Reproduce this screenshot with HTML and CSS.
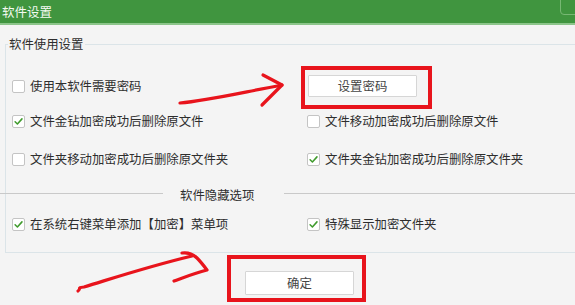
FILE: index.html
```html
<!DOCTYPE html>
<html lang="zh-CN">
<head>
<meta charset="utf-8">
<title>软件设置</title>
<link rel="stylesheet" href="styles.css">
</head>
<body>
<div class="window">
  <div class="titlebar">
    <span class="title">软件设置</span>
    <span class="close-edge"></span>
  </div>
  <fieldset class="group">
    <legend class="legend">软件使用设置</legend>
    <div class="grid">
      <label class="opt"><span class="box"></span>使用本软件需要密码</label>
      <div class="cell"><button class="btn">设置密码</button></div>
      <label class="opt"><span class="box checked"><svg viewBox="0 0 13 13"><path d="M2.5 6.8 L5.2 9.4 L10.6 3.4"/></svg></span>文件金钻加密成功后删除原文件</label>
      <label class="opt"><span class="box"></span>文件移动加密成功后删除原文件</label>
      <label class="opt"><span class="box"></span>文件夹移动加密成功后删除原文件夹</label>
      <label class="opt"><span class="box checked"><svg viewBox="0 0 13 13"><path d="M2.5 6.8 L5.2 9.4 L10.6 3.4"/></svg></span>文件夹金钻加密成功后删除原文件夹</label>
    </div>
    <div class="sep">
      <span class="sep-line first"></span>
      <span class="sep-text">软件隐藏选项</span>
      <span class="sep-line rest"></span>
    </div>
    <div class="grid grid2">
      <label class="opt"><span class="box checked"><svg viewBox="0 0 13 13"><path d="M2.5 6.8 L5.2 9.4 L10.6 3.4"/></svg></span>在系统右键菜单添加【加密】菜单项</label>
      <label class="opt"><span class="box checked"><svg viewBox="0 0 13 13"><path d="M2.5 6.8 L5.2 9.4 L10.6 3.4"/></svg></span>特殊显示加密文件夹</label>
    </div>
  </fieldset>
  <div class="footer">
    <button class="btn">确定</button>
  </div>
</div>
<svg class="annot" viewBox="0 0 575 305" width="575" height="305">
  <rect x="303" y="68" width="127" height="39" />
  <rect x="229" y="257" width="135" height="43" />
  <path d="M180 103 C 205 101, 230 95, 282 85" />
  <path d="M263 75 L282 85 L262 105" />
  <path d="M78 291 C 82 288, 76 288, 84 287 C 120 276, 150 266, 192 256" />
  <path d="M182 253 C 190 252, 195 256, 197 258 C 201 262, 204 266, 207 270 C 195 273, 185 277, 174 281" />
</svg>
</body>
</html>
```

FILE: styles.css
```css
html, body {
  margin: 0;
  padding: 0;
}
body {
  width: 575px;
  height: 305px;
  overflow: hidden;
  background: #f4f4f4;
  font-family: "Noto Sans CJK SC", "Noto Sans", sans-serif;
  font-size: 12.4px;
  color: #2e2e2e;
  position: relative;
}
.window {
  display: flex;
  flex-direction: column;
}
.titlebar {
  height: 23px;
  background: #40953f;
  border-bottom: 2px solid #8cc58a;
  display: flex;
  align-items: center;
  overflow: hidden;
}
.title {
  color: #f4faf2;
  font-size: 12.5px;
  padding-left: 2px;
  line-height: 23px;
}
.close-edge {
  margin-left: auto;
  align-self: flex-start;
  width: 20px;
  height: 15px;
  margin-top: -2px;
  margin-right: -7px;
  border: 1px solid #77b873;
  border-bottom-left-radius: 4px;
}
.group {
  margin: 12px -10px 0 5px;
  padding: 0 0 16px 6px;
  border: 1px solid #dbe4e8;
  min-width: 0;
}
.legend {
  margin-left: -4px;
  padding: 0 2px 0 1px;
  line-height: 14px;
}
.grid {
  display: grid;
  grid-template-columns: 295px 1fr;
  grid-template-rows: 22px 24px 28px;
  row-gap: 12px;
  align-items: center;
  padding-top: 24px;
}
.grid2 {
  grid-template-rows: 24px;
  padding-top: 10px;
}
.opt {
  display: flex;
  align-items: center;
  gap: 5px;
  white-space: nowrap;
}
.cell {
  display: flex;
  align-items: center;
}
.box {
  width: 13px;
  height: 13px;
  box-sizing: border-box;
  border: 1px solid #c4c4c4;
  border-radius: 2px;
  background: #fff;
  flex: 0 0 auto;
  display: flex;
}
.box svg {
  width: 11px;
  height: 11px;
  fill: none;
  stroke: #3f9b2c;
  stroke-width: 1.8;
  stroke-linecap: round;
  stroke-linejoin: round;
}
.btn {
  font-family: inherit;
  font-size: 12.4px;
  color: #444;
  width: 109px;
  height: 22px;
  padding: 0;
  margin-left: 1px;
  background: #fff;
  border: 1px solid #d6d6d6;
  border-radius: 1px;
}
.sep {
  display: flex;
  align-items: center;
  margin-top: 15px;
  margin-left: -12px;
  height: 14px;
}
.sep-line {
  height: 1px;
  background: #c9c9c9;
  margin-bottom: 3px;
}
.sep-line.first {
  width: 163px;
  margin-right: 17px;
}
.sep-text {
  line-height: 14px;
}
.sep-line.rest {
  flex: 1;
  margin-left: 30px;
}
.footer {
  padding: 18px 0 0 244px;
}
.footer .btn {
  height: 24px;
}
.annot {
  position: absolute;
  left: 0;
  top: 0;
  fill: none;
  stroke: #e8141c;
  stroke-linecap: round;
  stroke-linejoin: round;
}
.annot rect {
  stroke-width: 4;
  stroke-linecap: butt;
  stroke-linejoin: miter;
}
.annot path {
  stroke-width: 3.2;
}
```
